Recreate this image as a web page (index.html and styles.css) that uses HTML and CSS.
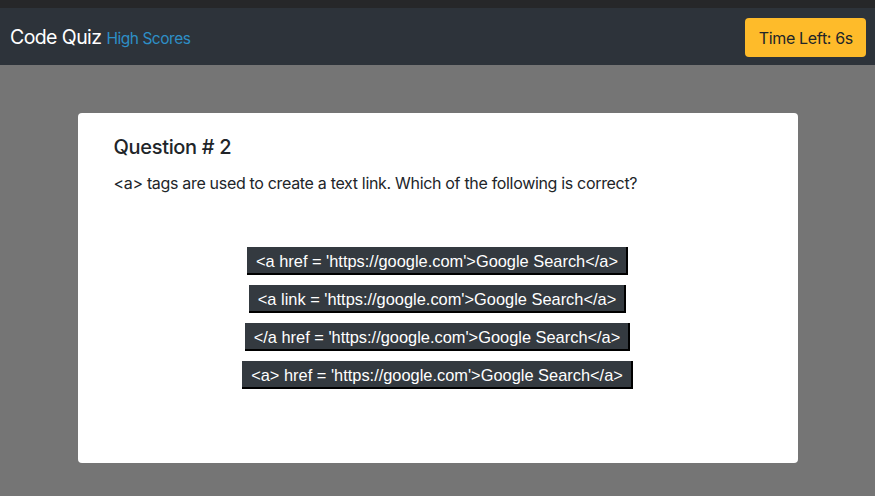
FILE: index.html
```html
<!DOCTYPE html>
<html>
<head>
<meta charset="utf-8">
<link rel="stylesheet" href="styles.css">
</head>
<body>
<div class="topstrip"></div>
<nav class="navbar">
  <div class="brand"><span class="title">Code Quiz</span> <a class="scores" href="#">High Scores</a></div>
  <div class="timer">Time Left: 6s</div>
</nav>
<main class="container">
  <section class="card">
    <h5 class="question-title">Question # 2</h5>
    <p class="question-text">&lt;a&gt; tags are used to create a text link. Which of the following is correct?</p>
    <div class="answers">
      <button class="answer">&lt;a href = 'https://google.com'&gt;Google Search&lt;/a&gt;</button>
      <button class="answer">&lt;a link = 'https://google.com'&gt;Google Search&lt;/a&gt;</button>
      <button class="answer">&lt;/a href = 'https://google.com'&gt;Google Search&lt;/a&gt;</button>
      <button class="answer">&lt;a&gt; href = 'https://google.com'&gt;Google Search&lt;/a&gt;</button>
    </div>
  </section>
</main>
</body>
</html>
```
FILE: styles.css
```css
* { box-sizing: border-box; }
html, body { margin: 0; padding: 0; }
body {
  background: #757575;
  font-family: Inter, "Noto Sans", sans-serif;
  letter-spacing: -0.02em;
  color: #212529;
  height: 496px;
  overflow: hidden;
}
.topstrip { height: 8px; background: #262729; }
.navbar {
  height: 57px;
  background: #2d333a;
  display: flex;
  align-items: center;
  justify-content: space-between;
  padding: 0 9px 0 10px;
}
.brand { display: flex; align-items: baseline; gap: 5px; }
.title { color: #fff; font-size: 19.5px; letter-spacing: -0.03em; }
.scores { color: #2d8fc6; font-size: 15.5px; letter-spacing: -0.03em; text-decoration: none; }
.timer {
  background: #febb2a;
  color: #212529;
  font-size: 16px;
  border-radius: 4px;
  height: 39px;
  padding: 0 13px 0 14px;
  display: flex;
  align-items: center;
  margin-top: 2px;
}
.container { width: 720px; margin: 48px auto 0; }
.card {
  background: #fff;
  border-radius: 4px;
  height: 350px;
  padding: 22px 36px;
}
.question-title { margin: 0; font-size: 20px; font-weight: 500; line-height: 1.2; }
.question-text { margin: 12px 0 0; font-size: 16px; line-height: 24px; }
.answers {
  margin-top: 52px;
  display: flex;
  flex-direction: column;
  align-items: center;
  gap: 10px;
}
.answer {
  font-family: "Liberation Sans", Arial, sans-serif;
  font-size: 16.4px;
  letter-spacing: 0;
  color: #fff;
  background: #343a40;
  height: 28px;
  padding: 2px 8px 0 9px;
  border: none;
  border-right: 2px solid #000;
  border-bottom: 2px solid #000;
  border-radius: 0;
}
```
